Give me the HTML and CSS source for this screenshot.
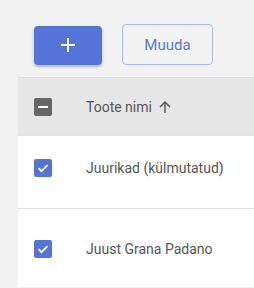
FILE: index.html
```html
<!DOCTYPE html>
<html lang="et">

<head>
    <meta charset="UTF-8">
    <meta name="viewport" content="width=device-width, initial-scale=1.0">
    <title>Tooted</title>
    <link rel="stylesheet" href="styles.css">
</head>

<body>
    <div class="toolbar">
        <button class="btn-add" aria-label="Lisa">
            <svg width="16" height="16" viewBox="0 0 16 16">
                <path d="M8 1v14M1 8h14" stroke="#fff" stroke-width="2" fill="none" />
            </svg>
        </button>
        <button class="btn-edit">Muuda</button>
    </div>

    <div class="table">
        <div class="row head">
            <span class="check mixed">
                <svg width="18" height="18" viewBox="0 0 18 18">
                    <path d="M4 9h10" stroke="#fff" stroke-width="2" />
                </svg>
            </span>
            <span class="name">Toote nimi</span>
            <svg class="sort" width="14" height="14" viewBox="0 0 14 14">
                <path d="M7 13V2M2 7l5-5 5 5" stroke="#555" stroke-width="1.4" fill="none" />
            </svg>
        </div>
        <div class="row first">
            <span class="check on">
                <svg width="18" height="18" viewBox="0 0 18 18">
                    <path d="M4.5 9.2l3 3 6-6" stroke="#fff" stroke-width="1.8" fill="none" />
                </svg>
            </span>
            <span class="name">Juurikad (külmutatud)</span>
        </div>
        <div class="row last">
            <span class="check on">
                <svg width="18" height="18" viewBox="0 0 18 18">
                    <path d="M4.5 9.2l3 3 6-6" stroke="#fff" stroke-width="1.8" fill="none" />
                </svg>
            </span>
            <span class="name">Juust Grana Padano</span>
        </div>
    </div>
</body>

</html>
```

FILE: styles.css
```css
body {
    margin: 0;
    background-color: #f2f2f2;
    font-family: 'Roboto', sans-serif;
    overflow: hidden;
}

.toolbar {
    display: flex;
    align-items: center;
    gap: 20px;
    padding: 12px 0 0 34px;
    height: 65px;
}

.btn-add {
    width: 68px;
    height: 39px;
    border: none;
    border-radius: 4px;
    background-color: #5474da;
    box-shadow: 0 2px 3px rgba(0, 0, 0, 0.25);
    display: flex;
    align-items: center;
    justify-content: center;
    margin-top: 1px;
}

.btn-edit {
    width: 91px;
    height: 41px;
    border: 1px solid #a9b9ee;
    border-radius: 4px;
    background: transparent;
    color: #5b78d8;
    font-family: inherit;
    font-size: 15px;
}

.table {
    margin-left: 18px;
    border-top: 1px solid #dcdcdc;
}

.row {
    display: flex;
    align-items: flex-start;
    box-sizing: border-box;
    height: 73px;
    padding: 31px 0 0 16px;
    background-color: #fff;
    border-bottom: 1px solid #e0e0e0;
}

.row.first {
    padding-top: 23px;
}

.row.last {
    height: 78px;
    border-bottom: none;
}

.row.head {
    height: 58px;
    padding-top: 0;
    align-items: center;
    background-color: #e6e6e6;
}

.check {
    width: 18px;
    height: 18px;
    border-radius: 2px;
    display: flex;
    flex-shrink: 0;
}

.check.mixed {
    background-color: #666;
}

.check.on {
    background-color: #5474da;
}

.name {
    margin-left: 34px;
    font-size: 14px;
    line-height: 18px;
    color: #555;
}

.row.head .name {
    line-height: 20px;
}

.sort {
    margin-left: 6px;
}
```
